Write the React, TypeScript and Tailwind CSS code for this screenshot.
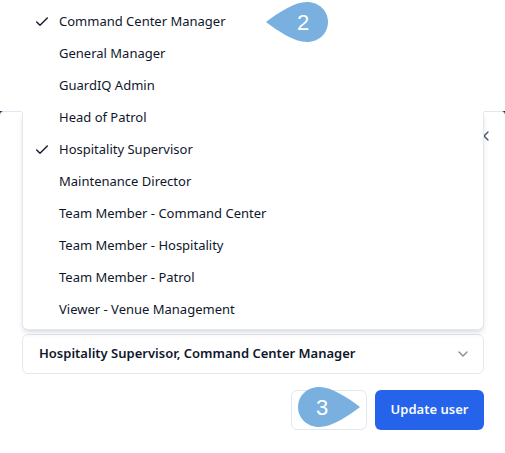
import { Check, ChevronDown, X } from "lucide-react";

const ROLES = [
  "Command Center Manager",
  "General Manager",
  "GuardIQ Admin",
  "Head of Patrol",
  "Hospitality Supervisor",
  "Maintenance Director",
  "Team Member - Command Center",
  "Team Member - Hospitality",
  "Team Member - Patrol",
  "Viewer - Venue Management"
];

const SELECTED = ["Hospitality Supervisor", "Command Center Manager"];

function Callout({ step, direction, className }: { step: number; direction: "left" | "right"; className: string }) {
  return (
    <svg width="62" height="40" viewBox="0 0 62 40" className={`pointer-events-none absolute z-20 ${className}`}>
      <path
        d="M0 20C12 11 28 0 41 0C53 0 62 9 62 20C62 31 53 40 41 40C28 40 12 29 0 20Z"
        fill="#79b0df"
        transform={direction === "right" ? "rotate(180 31 20)" : undefined}
      />
      <text
        x={direction === "left" ? 37 : 24}
        y="28"
        textAnchor="middle"
        className="fill-white font-['Liberation_Sans',Arial,sans-serif] text-[22px]"
      >
        {step}
      </text>
    </svg>
  );
}

function RoleMenu() {
  return (
    <div className="absolute inset-x-0 bottom-full z-10 mb-1 bg-white pb-1">
      {/* the frame only shows where the menu overlaps the dialog */}
      <div className="absolute inset-x-0 bottom-0 h-[218px] rounded-b-md border-x border-b border-slate-200 bg-white shadow-md" />
      <ul role="listbox" aria-label="Roles" aria-multiselectable="true" className="relative px-1">
        {ROLES.map((role) => {
          const selected = SELECTED.includes(role);
          return (
            <li key={role} role="option" aria-selected={selected}>
              <button type="button" className="flex h-8 w-full items-center gap-[9px] px-2 text-left">
                <span className="h-4 w-4 shrink-0">{selected ? <Check size={16} /> : null}</span>
                {role}
              </button>
            </li>
          );
        })}
      </ul>
    </div>
  );
}

export default function App() {
  return (
    <main className="relative overflow-hidden bg-white font-['Noto_Sans','Open_Sans',sans-serif] text-[13px] text-slate-900">
      <div className="mt-[111px] bg-slate-800">
        <section
          role="dialog"
          aria-label="Update user"
          className="rounded-t-[4px] border-t border-slate-200 bg-white pr-[21px] pb-6 pl-[22px]"
        >
          <header className="flex h-[222px] justify-end pt-4">
            <button type="button" aria-label="Close" className="-mr-2 h-4 w-4 text-slate-600">
              <X size={16} />
            </button>
          </header>

          <div className="relative">
            <RoleMenu />
            <Callout step={2} direction="left" className="bottom-full left-[244px] mb-[292px]" />
            <button
              type="button"
              aria-haspopup="listbox"
              aria-expanded="true"
              className="flex h-10 w-full items-center justify-between rounded-md border border-slate-200 bg-white pr-3 pl-4 font-semibold"
            >
              {SELECTED.join(", ")}
              <ChevronDown size={16} className="opacity-50" />
            </button>
          </div>

          <footer className="mt-4 flex justify-end gap-2">
            <div className="relative">
              <button
                type="button"
                aria-label="Cancel"
                className="h-10 w-[76px] rounded-md border border-slate-200 bg-white"
              />
              <Callout step={3} direction="right" className="-top-[3px] left-[7px]" />
            </div>
            <button type="submit" className="h-10 w-[109px] rounded-md bg-[#2563eb] font-semibold text-slate-50">
              Update user
            </button>
          </footer>
        </section>
      </div>
    </main>
  );
}
